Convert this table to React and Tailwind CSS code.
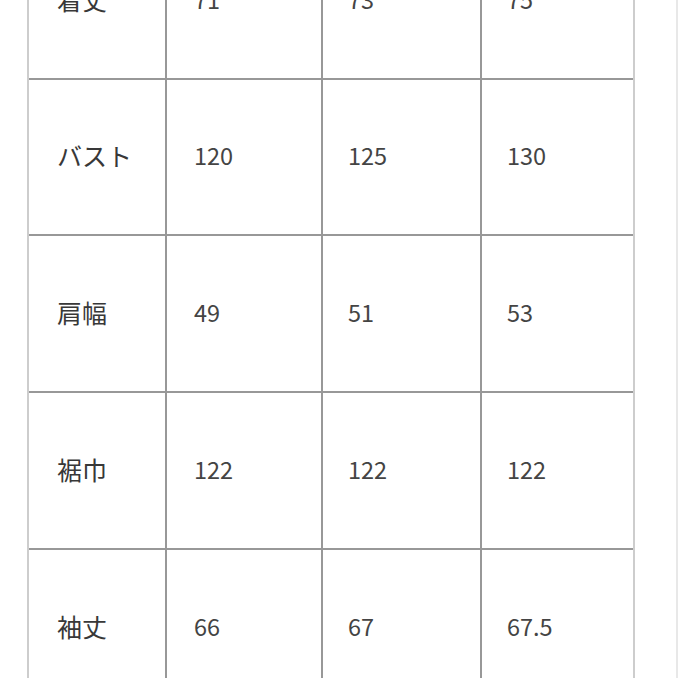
import React from 'react';

const rows = [
  { label: '着丈', values: ['71', '73', '75'], h: 'h-[155px]' },
  { label: 'バスト', values: ['120', '125', '130'], h: 'h-[154px]' },
  { label: '肩幅', values: ['49', '51', '53'], h: 'h-[155px]' },
  { label: '裾巾', values: ['122', '122', '122'], h: 'h-[155px]' },
  { label: '袖丈', values: ['66', '67', '67.5'], h: 'h-[155px]' },
];

const valuePad = ['pl-[27px]', 'pl-[25px]', 'pl-[25px]'];

const App = () => {
  return (
    <div
      className="w-[678px] h-[678px] overflow-hidden bg-white border-r-2 border-[#e8e8e8]"
      style={{ fontFamily: '"Noto Sans CJK JP", "Noto Sans", sans-serif' }}
    >
      <div className="ml-[27px] -mt-[79px] w-[608px] border-x-2 border-[#cdcdcd]">
        <div className="grid grid-cols-[136px_154px_157px_151px] gap-[2px] bg-[#989898] pt-[2px]">
          {rows.map((row) => (
            <React.Fragment key={row.label}>
              <div className={`${row.h} bg-white flex items-center pl-[28px] pb-[3px] text-[25px] leading-none text-[#383838]`}>
                {row.label}
              </div>
              {row.values.map((v, i) => (
                <div
                  key={i}
                  className={`${row.h} bg-white flex items-center ${valuePad[i]} pb-[2px] text-[23.5px] leading-none text-[#444444]`}
                >
                  {v}
                </div>
              ))}
            </React.Fragment>
          ))}
        </div>
      </div>
    </div>
  );
};

export default App;
